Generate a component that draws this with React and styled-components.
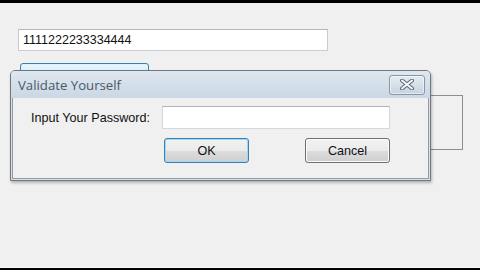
import React from "react";
import styled, { createGlobalStyle } from "styled-components";

const Global = createGlobalStyle`
  html, body { margin: 0; padding: 0; background: #000; }
  body { width: 480px; height: 270px; overflow: hidden; }
`;

const Screen = styled.div`
  width: 480px;
  height: 270px;
  display: flex;
  flex-direction: column;
  background: #000;
`;

const Bar = styled.div`
  height: ${(p) => p.$h}px;
  background: #000;
  flex: none;
`;

const Desk = styled.div`
  position: relative;
  flex: 1;
  background: #f0f0f0;
  border-bottom: 1px solid #fafafa;
  display: flex;
  flex-direction: column;
  align-items: flex-start;
  padding-top: 26px;
  font-family: "Liberation Sans", Arial, sans-serif;
`;

const TextBox = styled.div`
  margin-left: 18px;
  width: 304px;
  height: 20px;
  background: #fff;
  border: 1px solid #c9ccd1;
  border-top-color: #b4b7bc;
  display: flex;
  align-items: center;
  padding-left: 4px;
  box-sizing: content-box;
  font-size: 12.5px;
  color: #111;
`;

const FormButton = styled.div`
  margin-top: 12px;
  margin-left: 20px;
  width: 127px;
  height: 21px;
  border: 1px solid #3c7fb1;
  border-radius: 3px;
  background: linear-gradient(#eaf6fd, #bee6fd);
  box-shadow: inset 0 0 0 1px #ddf2fc;
`;

const GroupBox = styled.div`
  margin-top: 9px;
  margin-left: 300px;
  width: 161px;
  height: 53px;
  border: 1px solid #8e8e8e;
`;

const Dialog = styled.div`
  position: absolute;
  left: 10px;
  top: 67px;
  width: 419px;
  height: 109px;
  border: 1px solid #6f7780;
  border-radius: 5px 5px 0 0;
  background: #d7e1eb;
  box-shadow: 1px 2px 3px rgba(0, 0, 0, 0.25);
  display: flex;
  flex-direction: column;
`;

const TitleBar = styled.div`
  height: 27px;
  flex: none;
  display: flex;
  align-items: center;
  justify-content: space-between;
  padding: 0 5px 0 7px;
  background: linear-gradient(#dfe7ef, #cad7e4);
  border-radius: 4px 4px 0 0;
`;

const Title = styled.span`
  font-family: "Open Sans", "DejaVu Sans", sans-serif;
  font-size: 13.2px;
  color: #4b5866;
`;

const CloseButton = styled.div`
  width: 34px;
  height: 18px;
  border: 1px solid #8796a8;
  border-radius: 3px;
  background: linear-gradient(#e4ebf2, #c9d4df);
  box-shadow: inset 0 0 0 1px rgba(255, 255, 255, 0.5);
  display: flex;
  align-items: center;
  justify-content: center;
`;

const Body = styled.div`
  flex: 1;
  margin: 0 1px 1px 1px;
  background: #f0f0f0;
  border: 1px solid #9a9a9a;
  border-top: none;
  padding: 8px 0 0 18px;
  display: flex;
  flex-direction: column;
  gap: 9px;
`;

const Row = styled.div`
  display: flex;
  align-items: center;
  padding-left: ${(p) => p.$indent || 0}px;
  gap: ${(p) => p.$gap || 0}px;
`;

const Label = styled.span`
  width: 131px;
  font-size: 12.6px;
  color: #111;
`;

const Input = styled.div`
  width: 226px;
  height: 21px;
  background: #fff;
  border: 1px solid #d6d8dc;
  border-top-color: #b0b3b8;
`;

const Button = styled.div`
  width: 83px;
  height: 23px;
  border: 1px solid ${(p) => (p.$focused ? "#3c7fb1" : "#707070")};
  border-radius: 3px;
  background: linear-gradient(#f2f2f2 0%, #ebebeb 50%, #dddddd 51%, #cfcfcf 100%);
  box-shadow: inset 0 0 0 1px ${(p) => (p.$focused ? "#9fd8f5" : "#fbfbfb")};
  display: flex;
  align-items: center;
  justify-content: center;
  font-size: 12.6px;
  color: #111;
`;

const CloseIcon = () => (
  <svg width="16" height="11" viewBox="0 0 16 11">
    <path d="M3 1.5 L13 9.5 M13 1.5 L3 9.5" stroke="#5d6b7b" strokeWidth="4" strokeLinecap="round" />
    <path d="M3 1.5 L13 9.5 M13 1.5 L3 9.5" stroke="#f4f6f8" strokeWidth="2" strokeLinecap="round" />
  </svg>
);

export default function App() {
  return (
    <>
      <Global />
      <Screen>
        <Bar $h={3} />
        <Desk>
          <TextBox>1111222233334444</TextBox>
          <FormButton />
          <GroupBox />
          <Dialog>
            <TitleBar>
              <Title>Validate Yourself</Title>
              <CloseButton>
                <CloseIcon />
              </CloseButton>
            </TitleBar>
            <Body>
              <Row>
                <Label>Input Your Password:</Label>
                <Input />
              </Row>
              <Row $indent={133} $gap={56}>
                <Button $focused>OK</Button>
                <Button>Cancel</Button>
              </Row>
            </Body>
          </Dialog>
        </Desk>
        <Bar $h={2} />
      </Screen>
    </>
  );
}
